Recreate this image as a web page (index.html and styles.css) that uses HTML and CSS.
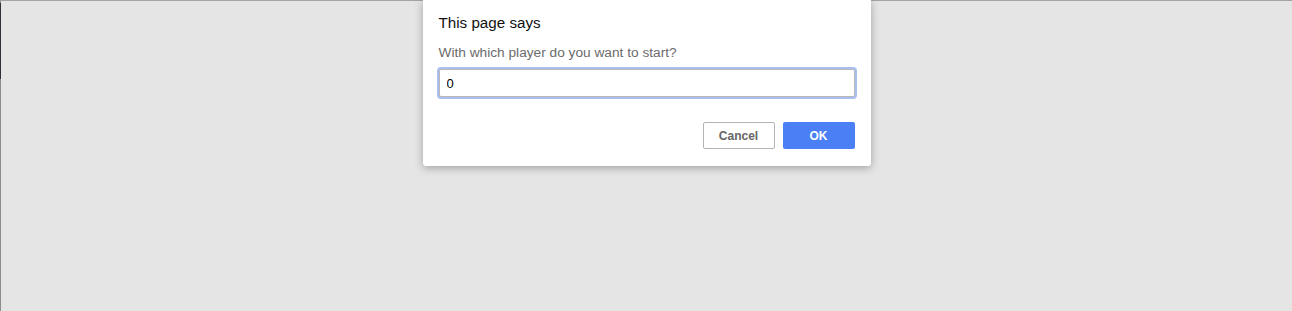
FILE: index.html
```html
<!DOCTYPE html>
<html lang="en">
<head>
  <meta charset="UTF-8" />
  <title>Prompt</title>
  <link rel="stylesheet" href="styles.css">
</head>
<body>
  <div class="page">
    <div class="edge">
      <div class="edge-dark"></div>
    </div>
    <div class="overlay">
      <div class="dialog">
        <h2 class="dialog-title">This page says</h2>
        <p class="dialog-message">With which player do you want to start?</p>
        <input class="dialog-input" type="text" value="0">
        <div class="dialog-footer">
          <button class="btn btn-cancel">Cancel</button>
          <button class="btn btn-ok">OK</button>
        </div>
      </div>
    </div>
  </div>
</body>
</html>
```

FILE: styles.css
```css
html, body {
  margin: 0;
  padding: 0;
  height: 100%;
}

body {
  font-family: "Liberation Sans", Arial, sans-serif;
  background-color: #e5e5e5;
  overflow: hidden;
}

.page {
  display: flex;
  height: 100%;
  border-top: 1px solid #a3a3a3;
  box-sizing: border-box;
}

.edge {
  width: 1px;
  background-color: #8c8c8c;
  display: flex;
  flex-direction: column;
}

.edge-dark {
  margin-top: 2px;
  height: 76px;
  background-color: #2e3238;
}

.overlay {
  flex: 1;
  display: flex;
  justify-content: center;
  margin-top: -1px;
  padding-right: 1px;
}

.dialog {
  width: 448px;
  height: 166px;
  box-sizing: border-box;
  background-color: #fff;
  padding: 0 16px;
  border-radius: 0 0 3px 3px;
  box-shadow: 0 2px 8px rgba(0, 0, 0, 0.3);
  margin-left: 1px;
}

.dialog-title {
  margin: 0;
  padding-top: 14px;
  font-size: 15.2px;
  font-weight: normal;
  color: #111;
  line-height: 18px;
}

.dialog-message {
  margin: 13px 0 0;
  font-size: 13.7px;
  color: #6b6b6b;
  line-height: 16px;
}

.dialog-input {
  display: block;
  width: 100%;
  box-sizing: border-box;
  margin-top: 8px;
  height: 28px;
  padding: 0 7px;
  font-family: "Liberation Sans", Arial, sans-serif;
  font-size: 13px;
  color: #000;
  border: 1px solid #b8b8b8;
  border-radius: 2px;
  box-shadow: 0 0 0 2px #a9bff2;
  outline: none;
}

.dialog-footer {
  display: flex;
  justify-content: flex-end;
  gap: 8px;
  margin-top: 25px;
}

.btn {
  width: 72px;
  height: 27px;
  font-family: "Liberation Sans", Arial, sans-serif;
  font-size: 12px;
  font-weight: bold;
  border-radius: 2px;
  cursor: pointer;
}

.btn-cancel {
  background-color: #fff;
  color: #666;
  border: 1px solid #b4b4b4;
}

.btn-ok {
  background-color: #4a7ff6;
  color: #fff;
  border: none;
}
```
